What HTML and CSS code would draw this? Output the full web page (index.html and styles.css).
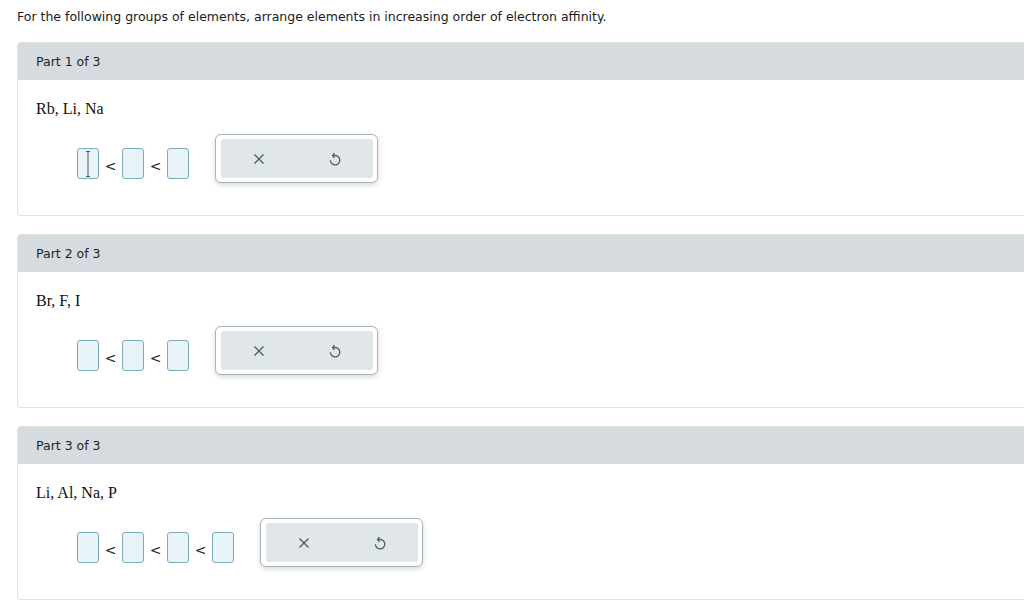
FILE: index.html
```html
<!DOCTYPE html>
<html>
<head>
<meta charset="utf-8">
<link rel="stylesheet" href="styles.css">
</head>
<body>
<div class="page">
  <p class="prompt">For the following groups of elements, arrange elements in increasing order of electron affinity.</p>

  <section class="card">
    <div class="card-head">Part 1 of 3</div>
    <div class="card-body">
      <div class="elements">Rb, Li, Na</div>
      <div class="answer-row">
        <div class="slots">
          <span class="slot focused"><svg class="cursor" viewBox="0 0 8 28" width="8" height="28"><path d="M2 1.5h4M4 1.5v25M2 26.5h4" stroke="#555" stroke-width="1" fill="none"/></svg></span>
          <span class="lt">&lt;</span>
          <span class="slot"></span>
          <span class="lt">&lt;</span>
          <span class="slot"></span>
        </div>
        <div class="tools">
          <div class="tools-inner">
            <button class="tool" aria-label="clear"><svg viewBox="0 0 12 12" width="12" height="12"><path d="M1.5 1.5l9 9M10.5 1.5l-9 9" stroke="#46606f" stroke-width="1.4" fill="none"/></svg></button>
            <button class="tool" aria-label="undo"><svg viewBox="0 0 12 14" width="12" height="14"><path d="M6 3.5A4.7 4.7 0 1 1 1.4 8.2" stroke="#46606f" stroke-width="1.3" fill="none"/><path d="M6 3.5H3.8M5.4 1.2L3.6 3.5L5.4 5.8" stroke="#46606f" stroke-width="1.3" fill="none" stroke-linejoin="round"/></svg></button>
          </div>
        </div>
      </div>
    </div>
  </section>

  <section class="card">
    <div class="card-head">Part 2 of 3</div>
    <div class="card-body">
      <div class="elements">Br, F, I</div>
      <div class="answer-row">
        <div class="slots">
          <span class="slot"></span>
          <span class="lt">&lt;</span>
          <span class="slot"></span>
          <span class="lt">&lt;</span>
          <span class="slot"></span>
        </div>
        <div class="tools">
          <div class="tools-inner">
            <button class="tool" aria-label="clear"><svg viewBox="0 0 12 12" width="12" height="12"><path d="M1.5 1.5l9 9M10.5 1.5l-9 9" stroke="#46606f" stroke-width="1.4" fill="none"/></svg></button>
            <button class="tool" aria-label="undo"><svg viewBox="0 0 12 14" width="12" height="14"><path d="M6 3.5A4.7 4.7 0 1 1 1.4 8.2" stroke="#46606f" stroke-width="1.3" fill="none"/><path d="M6 3.5H3.8M5.4 1.2L3.6 3.5L5.4 5.8" stroke="#46606f" stroke-width="1.3" fill="none" stroke-linejoin="round"/></svg></button>
          </div>
        </div>
      </div>
    </div>
  </section>

  <section class="card">
    <div class="card-head">Part 3 of 3</div>
    <div class="card-body">
      <div class="elements">Li, Al, Na, P</div>
      <div class="answer-row">
        <div class="slots">
          <span class="slot"></span>
          <span class="lt">&lt;</span>
          <span class="slot"></span>
          <span class="lt">&lt;</span>
          <span class="slot"></span>
          <span class="lt">&lt;</span>
          <span class="slot"></span>
        </div>
        <div class="tools">
          <div class="tools-inner">
            <button class="tool" aria-label="clear"><svg viewBox="0 0 12 12" width="12" height="12"><path d="M1.5 1.5l9 9M10.5 1.5l-9 9" stroke="#46606f" stroke-width="1.4" fill="none"/></svg></button>
            <button class="tool" aria-label="undo"><svg viewBox="0 0 12 14" width="12" height="14"><path d="M6 3.5A4.7 4.7 0 1 1 1.4 8.2" stroke="#46606f" stroke-width="1.3" fill="none"/><path d="M6 3.5H3.8M5.4 1.2L3.6 3.5L5.4 5.8" stroke="#46606f" stroke-width="1.3" fill="none" stroke-linejoin="round"/></svg></button>
          </div>
        </div>
      </div>
    </div>
  </section>
</div>
</body>
</html>
```

FILE: styles.css
```css
html, body {
  margin: 0;
  padding: 0;
  background: #ffffff;
}
body {
  font-family: "DejaVu Sans", Verdana, sans-serif;
  color: #222;
}
.page {
  padding: 9px 0 0 17px;
}
.prompt {
  margin: 0 0 17px 0;
  font-size: 12.5px;
  line-height: 16px;
  color: #1a1a1a;
}
.card {
  border: 1px solid #dde2e5;
  border-right: 0;
  border-radius: 4px 0 0 4px;
  margin-bottom: 18px;
  overflow: hidden;
}
.card-head {
  background: #d5dbdf;
  height: 37px;
  line-height: 37px;
  padding-left: 18px;
  font-size: 12.5px;
  color: #1f1f1f;
}
.card-body {
  padding: 20px 0 32px 18px;
}
.elements {
  font-family: "Liberation Serif", "Times New Roman", serif;
  font-size: 16px;
  line-height: 18px;
  color: #111;
}
.answer-row {
  display: flex;
  align-items: flex-start;
  margin-top: 16px;
  padding-left: 41px;
}
.slots {
  display: flex;
  align-items: center;
  margin-top: 14px;
}
.slot {
  display: flex;
  align-items: center;
  justify-content: center;
  width: 22px;
  height: 31px;
  box-sizing: border-box;
  border: 1.5px solid #7eabbc;
  border-radius: 3px;
  background: #e8f3f8;
}
.lt {
  font-family: "DejaVu Sans", sans-serif;
  font-size: 14px;
  color: #222;
  width: 23px;
  text-align: center;
  padding-top: 4px;
}
.tools {
  margin-left: 26px;
  border: 1px solid #a7b4bb;
  border-radius: 6px;
  padding: 4px 4px 4px 5px;
  background: #fff;
  box-shadow: 0 2px 5px rgba(0, 0, 0, 0.16);
}
.tools-inner {
  display: flex;
  width: 152px;
  height: 39px;
  background: #e1e6e9;
  border-radius: 3px;
}
.tool {
  flex: 1;
  display: flex;
  align-items: center;
  justify-content: center;
  border: 0;
  background: transparent;
  padding: 0;
  margin: 0;
}
.cursor {
  display: block;
}
```
